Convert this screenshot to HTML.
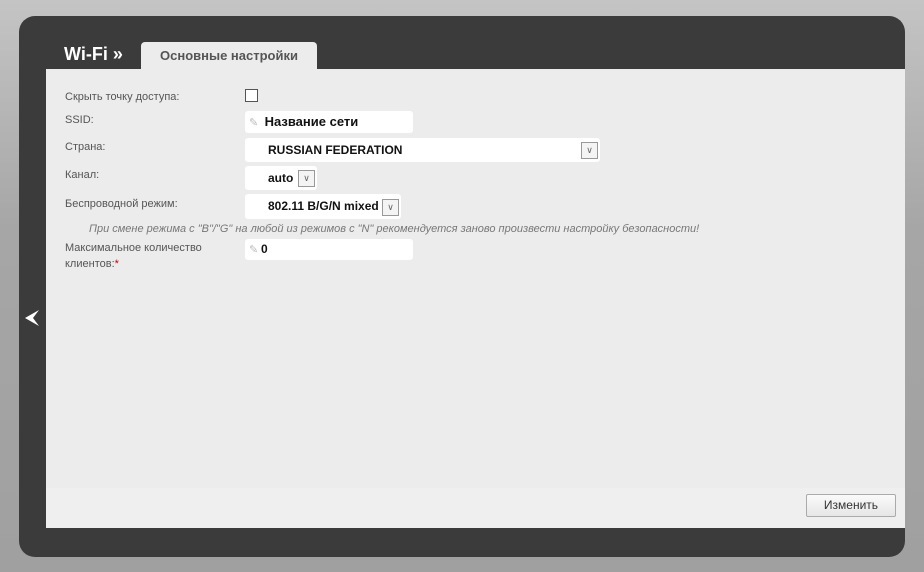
<!DOCTYPE html>
<html><head><meta charset="utf-8"><style>
body{margin:0;width:924px;height:572px;background:linear-gradient(#c4c4c4,#a6a6a6 40%,#a0a0a0);position:relative;overflow:hidden;font-family:"Liberation Sans",Arial,sans-serif;}
.dark{position:absolute;left:19px;top:16px;width:886px;height:541px;background:#3b3b3b;border-radius:16px 16px 16px 16px;}
.title{position:absolute;left:64px;top:44px;color:#fff;font-weight:bold;font-size:18px;}
.tab{position:absolute;left:141px;top:42px;width:176px;height:28px;background:#ececec;border-radius:4px 4px 0 0;font-size:13px;font-weight:bold;color:#555;text-align:center;line-height:28px;}
.panel{position:absolute;left:46px;top:69px;width:859px;height:459px;background:#ececec;}
.foot{position:absolute;left:46px;top:488px;width:859px;height:40px;background:#efefef;}
.lbl{position:absolute;left:65px;font-size:11px;color:#555;}
.inp{position:absolute;background:#fff;border-radius:3px;font-weight:bold;color:#111;font-size:12px;}
.sel{position:absolute;width:15px;height:15px;border:1px solid #999;background:#f4f4f4;font-size:9px;color:#666;text-align:center;line-height:15px;}
.btn{position:absolute;left:806px;top:494px;width:88px;height:21px;border:1px solid #aaa;border-radius:2px;background:linear-gradient(#fafafa,#e6e6e6);font-size:12px;color:#333;text-align:center;line-height:21px;}
.pen{display:inline-block;width:12px;color:#bbb;font-size:11px;font-weight:normal;}
</style></head><body>
<div class="dark"></div>
<div class="title">Wi-Fi »</div>
<div class="tab">Основные настройки</div>
<div class="panel"></div>
<div class="foot"></div>
<div class="lbl" style="top:91px">Скрыть точку доступа:</div>
<div style="position:absolute;left:245px;top:89px;width:11px;height:11px;border:1px solid #555;background:#fff"></div>
<div class="lbl" style="top:114px">SSID:</div>
<div class="inp" style="left:245px;top:111px;width:168px;height:22px;line-height:22px;font-size:13px"><span class="pen" style="margin-left:4px">✎</span> Название сети</div>
<div class="lbl" style="top:141px">Страна:</div>
<div class="inp" style="left:245px;top:138px;width:355px;height:24px;line-height:24px;padding-left:23px;box-sizing:border-box">RUSSIAN FEDERATION</div>
<div class="sel" style="left:581px;top:142px">∨</div>
<div class="lbl" style="top:169px">Канал:</div>
<div class="inp" style="left:245px;top:166px;width:72px;height:24px;line-height:24px;padding-left:23px;box-sizing:border-box">auto</div>
<div class="sel" style="left:298px;top:170px">∨</div>
<div class="lbl" style="top:198px">Беспроводной режим:</div>
<div class="inp" style="left:245px;top:194px;width:156px;height:25px;line-height:25px;padding-left:23px;box-sizing:border-box">802.11 B/G/N mixed</div>
<div class="sel" style="left:382px;top:199px">∨</div>
<div style="position:absolute;left:89px;top:223px;font-size:11px;font-style:italic;color:#777">При смене режима с "B"/"G" на любой из режимов с "N" рекомендуется заново произвести настройку безопасности!</div>
<div class="lbl" style="top:240px;line-height:16px">Максимальное количество<br>клиентов:<span style="color:#c00">*</span></div>
<div class="inp" style="left:245px;top:239px;width:168px;height:21px;line-height:21px"><span class="pen" style="margin-left:4px">✎</span>0</div>
<svg style="position:absolute;left:24px;top:309px" width="16" height="18"><path d="M15 1 L1 9 L15 17 L9 9 Z" fill="#fff"/></svg>
<div class="btn">Изменить</div>
</body></html>
